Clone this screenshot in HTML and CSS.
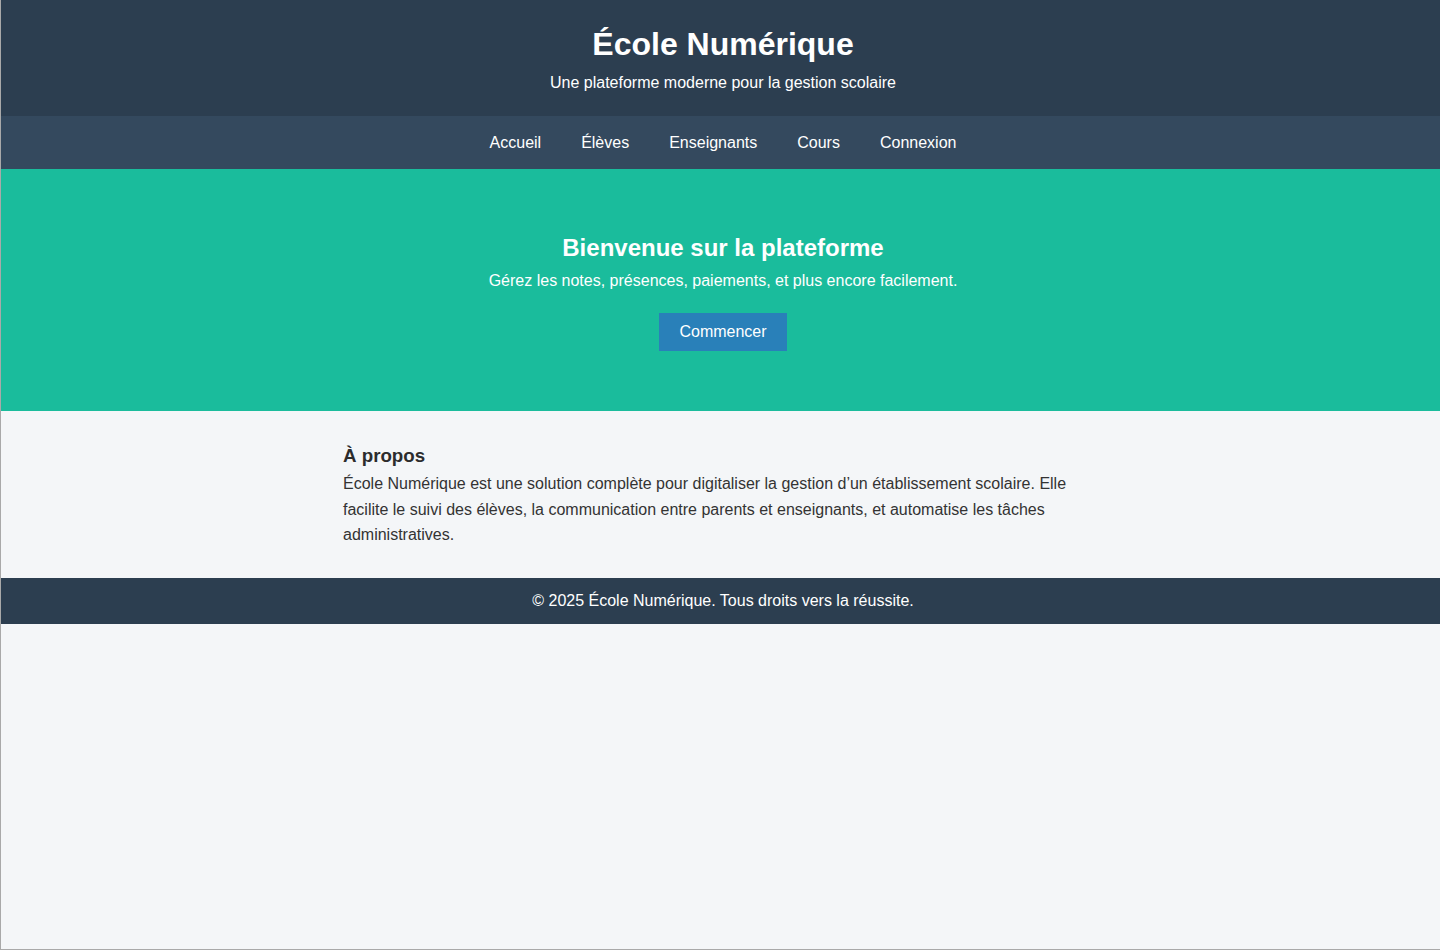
FILE: index.html
```html
<!DOCTYPE html>
<html lang="fr">
<head>
<meta charset="utf-8">
<title>École Numérique</title>
<link rel="stylesheet" href="styles.css">
</head>
<body>
<header class="site-header">
  <h1 class="site-title">École Numérique</h1>
  <p class="site-tagline">Une plateforme moderne pour la gestion scolaire</p>
</header>
<nav class="site-nav">
  <a href="#" class="nav-link">Accueil</a>
  <a href="#" class="nav-link">Élèves</a>
  <a href="#" class="nav-link">Enseignants</a>
  <a href="#" class="nav-link">Cours</a>
  <a href="#" class="nav-link">Connexion</a>
</nav>
<section class="hero">
  <h2 class="hero-title">Bienvenue sur la plateforme</h2>
  <p class="hero-text">Gérez les notes, présences, paiements, et plus encore facilement.</p>
  <a href="#" class="btn">Commencer</a>
</section>
<section class="about">
  <div class="about-inner">
    <h3 class="about-title">À propos</h3>
    <p class="about-text">École Numérique est une solution complète pour digitaliser la gestion d’un établissement scolaire. Elle facilite le suivi des élèves, la communication entre parents et enseignants, et automatise les tâches administratives.</p>
  </div>
</section>
<footer class="site-footer">
  <p class="footer-text">© 2025 École Numérique. Tous droits vers la réussite.</p>
</footer>
</body>
</html>
```
FILE: styles.css
```css
* { box-sizing: border-box; }
html, body { margin: 0; padding: 0; }
body {
  font-family: "Liberation Sans", Arial, sans-serif;
  font-size: 16px;
  background: #f4f6f8;
  color: #333;
  min-height: 950px;
  border-left: 1px solid #a9a9a9;
  border-bottom: 1px solid #a9a9a9;
}
.site-header {
  background: #2c3e50;
  color: #fff;
  text-align: center;
  padding: 26px 0 24px 5px;
}
.site-title {
  margin: 0 0 11px;
  font-size: 32px;
  font-weight: bold;
  line-height: normal;
}
.site-tagline {
  margin: 0;
  font-size: 16px;
  line-height: normal;
}
.site-nav {
  background: #34495e;
  display: flex;
  justify-content: center;
  gap: 40px;
  padding: 17px 0 17px 5px;
  line-height: 19px;
  height: 53px;
}
.nav-link {
  color: #fff;
  text-decoration: none;
}
.hero {
  background: #1abc9c;
  color: #fff;
  text-align: center;
  padding: 65px 20px 60px 25px;
}
.hero-title {
  margin: 0 0 10px;
  font-size: 24px;
  line-height: normal;
}
.hero-text {
  margin: 0 0 23px;
  line-height: normal;
}
.btn {
  display: inline-block;
  background: #2980b9;
  color: #fff;
  text-decoration: none;
  padding: 10px 20px;
  line-height: normal;
}
.about {
  padding: 34px 0 30px 5px;
}
.about-inner {
  max-width: 800px;
  margin: 0 auto;
  padding: 0 20px;
}
.about-title {
  margin: 0 0 4px;
  font-size: 18.72px;
  line-height: normal;
  color: #2c2c2c;
}
.about-text {
  margin: 0;
  line-height: 1.6;
  color: #333;
}
.site-footer {
  background: #2c3e50;
  color: #fff;
  text-align: center;
  padding: 14px 0 14px 5px;
}
.footer-text {
  margin: 0;
  line-height: normal;
}
```
